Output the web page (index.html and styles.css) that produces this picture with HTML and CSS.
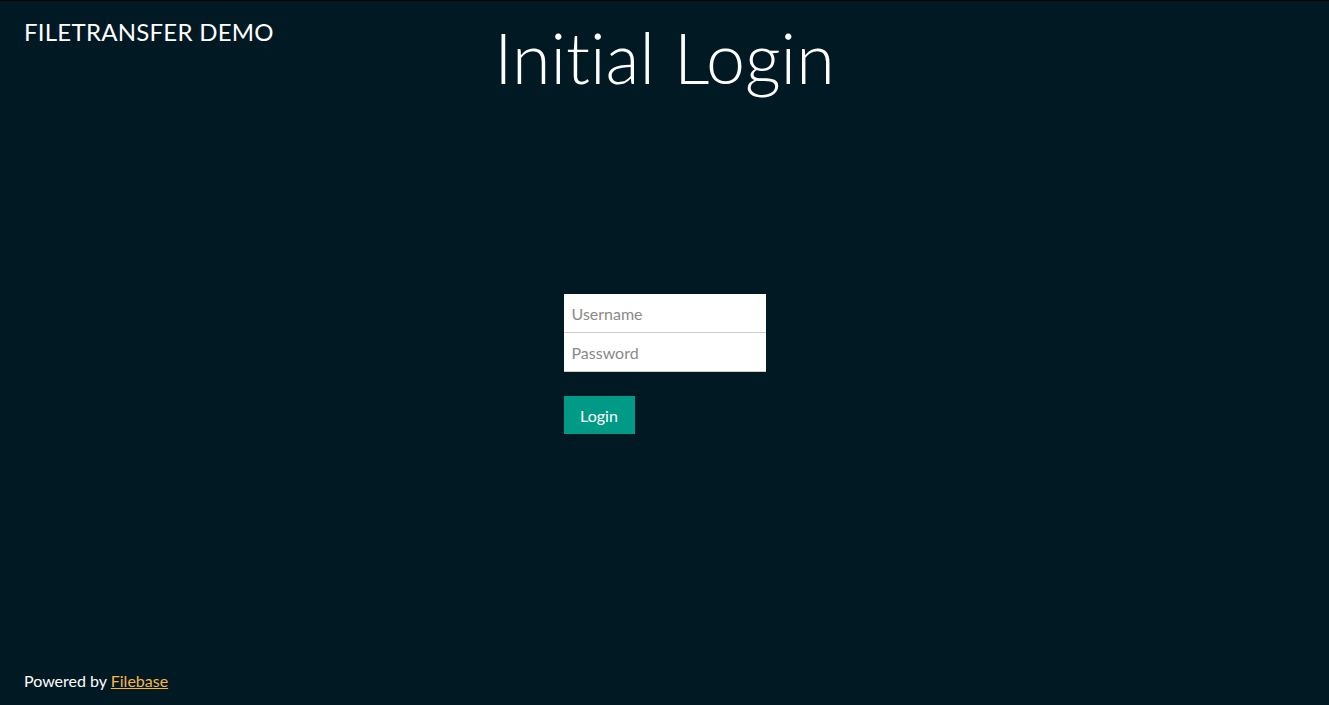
FILE: index.html
```html
<!DOCTYPE html>
<html>
<head>
<meta charset="utf-8">
<link rel="stylesheet" href="styles.css">
</head>
<body>
<div class="page">
  <header class="top">
    <div class="brand">FILETRANSFER DEMO</div>
    <h1 class="title">Initial Login</h1>
    <div></div>
  </header>
  <main class="main">
    <form class="login">
      <div class="fields">
        <input class="field" type="text" placeholder="Username">
        <input class="field" type="password" placeholder="Password">
      </div>
      <button class="btn" type="button">Login</button>
    </form>
  </main>
  <footer class="foot">Powered by <a href="#">Filebase</a></footer>
</div>
</body>
</html>
```
FILE: styles.css
```css
html, body { margin: 0; padding: 0; }
body {
  background: #011923;
  color: #fff;
  font-family: Lato, "Open Sans", sans-serif;
  font-variant-ligatures: none;
}
.page {
  height: 705px;
  box-sizing: border-box;
  border-top: 1px solid #000;
  display: flex;
  flex-direction: column;
}
.top {
  display: grid;
  grid-template-columns: 1fr auto 1fr;
  padding: 0 24px;
}
.brand {
  font-size: 24px;
  letter-spacing: 0.25px;
  padding-top: 17px;
  line-height: 28px;
}
.title {
  margin: 0;
  font-weight: 300;
  font-size: 70px;
  line-height: 84px;
  padding-top: 14px;
}
.main {
  flex: 1;
  display: flex;
  justify-content: center;
  padding-top: 195px;
}
.login { width: 202px; }
.fields { display: flex; flex-direction: column; }
.field {
  box-sizing: border-box;
  height: 39px;
  width: 202px;
  border: none;
  border-bottom: 1px solid #ccc;
  margin: 0;
  padding: 0 8px;
  font-family: inherit;
  font-size: 16px;
  background: #fff;
  outline: none;
}
.field::placeholder { color: #8a8a8a; }
.btn {
  margin-top: 24px;
  height: 38px;
  width: 71px;
  border: none;
  background: #009a87;
  color: #fff;
  font-family: inherit;
  font-size: 16px;
  padding: 0;
}
.foot {
  padding: 0 24px 14px;
  font-size: 16px;
  line-height: 20px;
}
.foot a { color: #f7b745; }
```
